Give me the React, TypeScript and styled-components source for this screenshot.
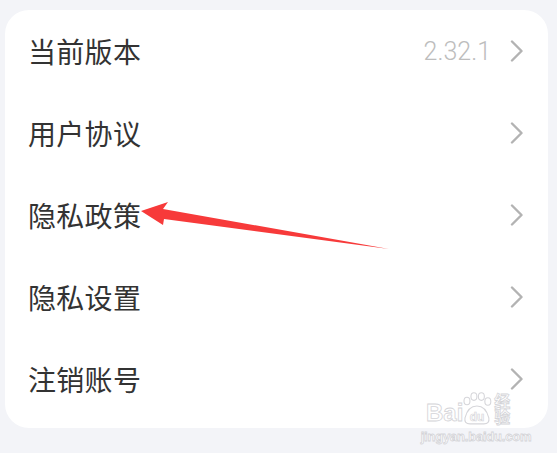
import styled, { createGlobalStyle } from "styled-components";

const rows = [
  { label: "当前版本", value: "2.32.1" },
  { label: "用户协议" },
  { label: "隐私政策" },
  { label: "隐私设置" },
  { label: "注销账号" },
];

function Chevron() {
  return (
    <svg width="14" height="22" viewBox="0 0 14 22">
      <polyline
        points="2,1.5 11.5,11 2,20.5"
        fill="none"
        stroke="#b3b3b3"
        strokeWidth="2.4"
        strokeLinecap="round"
        strokeLinejoin="round"
      />
    </svg>
  );
}

function App() {
  return (
    <>
      <Global />
      <Page>
        <Card>
          {rows.map((r) => (
            <Row key={r.label}>
              <Label>{r.label}</Label>
              <Right>
                {r.value && <Value>{r.value}</Value>}
                <Chevron />
              </Right>
            </Row>
          ))}
        </Card>

        <Arrow width="557" height="453" viewBox="0 0 557 453">
          <polygon
            points="141,211 168,202 163,209 389,249 164,219 163,225"
            fill="#f73a3a"
          />
        </Arrow>

        <Mark>
          <MarkTop>
            <span>Bai</span>
            <Paw width="30" height="33" viewBox="0 0 30 33">
              <g fill="none" stroke="#d6d6da" strokeWidth="1.1">
                <ellipse cx="5" cy="9" rx="3" ry="3.8" />
                <ellipse cx="12" cy="4.5" rx="3" ry="3.8" />
                <ellipse cx="19.5" cy="4.5" rx="3" ry="3.8" />
                <ellipse cx="26" cy="9.5" rx="3" ry="3.8" />
                <path d="M3 26 Q6 14 15 14 Q24 14 27 26 Q28 32 22 32 L8 32 Q2 32 3 26 Z" />
              </g>
              <text
                x="15"
                y="29"
                textAnchor="middle"
                fontSize="12"
                fontFamily="Liberation Sans, sans-serif"
                fontWeight="700"
                fill="#fff"
                stroke="#d6d6da"
                strokeWidth="0.7"
              >
                du
              </text>
            </Paw>
            <span>经验</span>
          </MarkTop>
          <MarkUrl>jingyan.baidu.com</MarkUrl>
        </Mark>
      </Page>
    </>
  );
}
export default App;

const Global = createGlobalStyle`
  html, body {
    margin: 0;
    padding: 0;
    background: #f3f4f8;
  }
  #root {
    width: 557px;
    height: 453px;
    overflow: hidden;
  }
`;

const Page = styled.div`
  position: relative;
  width: 557px;
  height: 453px;
  padding: 10px 9px 0 5px;
  box-sizing: border-box;
  background: #f3f4f8;
  font-family: "Noto Sans CJK SC", "Noto Sans", sans-serif;
`;

const Card = styled.div`
  background: #ffffff;
  border-radius: 24px;
  padding: 0 0 8px;
  display: flex;
  flex-direction: column;
`;

const Row = styled.div`
  height: 82px;
  display: flex;
  align-items: center;
  justify-content: space-between;
  padding: 0 24px 0 23px;
`;

const Label = styled.div`
  font-size: 28px;
  color: #333333;
  line-height: 1;
  letter-spacing: 0.3px;
`;

const Right = styled.div`
  display: flex;
  align-items: center;
  gap: 19px;
`;

const Value = styled.div`
  font-family: Roboto, "Liberation Sans", sans-serif;
  font-size: 25px;
  font-weight: 300;
  color: #bdbdbd;
  line-height: 1;
`;

const Arrow = styled.svg`
  position: absolute;
  left: 0;
  top: 0;
  pointer-events: none;
`;

const Mark = styled.div`
  position: absolute;
  left: 426px;
  top: 392px;
  width: 100px;
  display: flex;
  flex-direction: column;
  align-items: center;
  color: #ffffff;
  -webkit-text-stroke: 0.8px #d4d4d8;
  font-family: "Liberation Sans", sans-serif;
`;

const MarkTop = styled.div`
  display: flex;
  align-items: flex-end;
  font-size: 24px;
  font-weight: 700;
  line-height: 1;
  span:first-child {
    margin-bottom: 0px;
  }
  span:last-child {
    font-family: "Noto Sans CJK SC", sans-serif;
    font-size: 16px;
    margin-left: 2px;
    margin-bottom: 1px;
  }
`;

const Paw = styled.svg`
  margin: 0 0 0 -1px;
`;

const MarkUrl = styled.div`
  margin-top: 4px;
  font-size: 13px;
  font-weight: 700;
  letter-spacing: -0.2px;
`;
